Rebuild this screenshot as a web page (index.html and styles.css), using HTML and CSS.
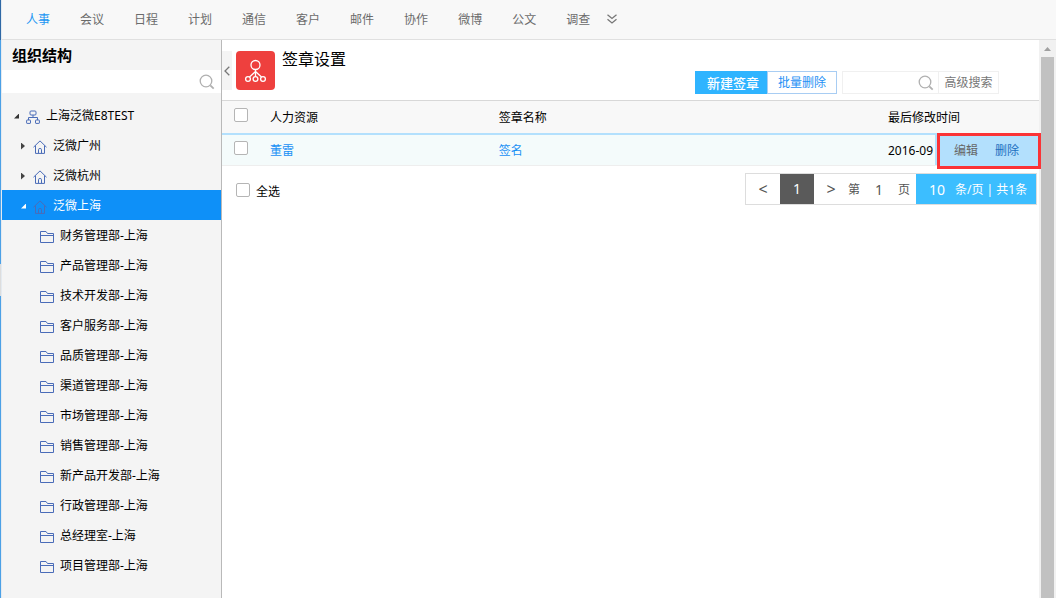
FILE: index.html
```html
<!DOCTYPE html>
<html lang="zh-CN">
<head>
<meta charset="utf-8">
<title>签章设置</title>
<link rel="stylesheet" href="styles.css">
</head>
<body>
<svg class="defs" aria-hidden="true">
  <symbol id="i-search" viewBox="0 0 16 16"><circle cx="7" cy="7" r="5.8"/><path d="M11.3 11.3l3.4 3.4" stroke-width="1.8"/></symbol>
  <symbol id="i-org" viewBox="0 0 14 14"><rect x="4" y="1" width="6" height="4" rx="1"/><path d="M7 5v2.500M2.500 10V7.500h9V10"/><rect x=".6" y="10" width="3.900" height="3.400" rx=".5"/><rect x="9.500" y="10" width="3.900" height="3.400" rx=".5"/></symbol>
  <symbol id="i-home" viewBox="0 0 14 14"><path d="M.5 7.2L7 .9l6.500 6.300M2.500 5.500v7.900h9V5.500M5.500 13.300V9.500q0-1 1.500-1t1.500 1v3.800"/></symbol>
  <symbol id="i-folder" viewBox="0 0 14 14"><path d="M.5 12.500v-11h5.500l1.500 2h6v9zM.5 5.500h13"/></symbol>
</svg>
<div class="app">
  <div class="rail"><div class="rail-top"></div><div class="rail-upper"></div><div class="rail-grip"></div><div class="rail-lower"></div></div>
  <div class="page">
    <nav class="topnav">
      <a class="on" href="#">人事</a><a href="#">会议</a><a href="#">日程</a><a href="#">计划</a><a href="#">通信</a><a href="#">客户</a><a href="#">邮件</a><a href="#">协作</a><a href="#">微博</a><a href="#">公文</a><a href="#">调查</a>
      <button class="more" aria-label="更多"><svg width="10" height="10" viewBox="0 0 10 10"><path d="M.5.8L5 4.500 9.500.8M.5 5.300L5 9l4.500-3.700"/></svg></button>
    </nav>
    <div class="body">
      <aside class="side">
        <h2>组织结构</h2>
        <div class="side-search"><input type="text" aria-label="搜索组织"><button aria-label="搜索"><svg class="search"><use href="#i-search"/></svg></button></div>
        <ul class="tree">
          <li><i class="open"></i><svg class="ico"><use href="#i-org"/></svg><a href="#">上海泛微E8TEST</a></li>
          <li class="l2"><i class="shut"></i><svg class="ico"><use href="#i-home"/></svg><a href="#">泛微广州</a></li>
          <li class="l2"><i class="shut"></i><svg class="ico"><use href="#i-home"/></svg><a href="#">泛微杭州</a></li>
          <li class="l2 sel"><i class="open"></i><svg class="ico"><use href="#i-home"/></svg><a href="#">泛微上海</a></li>
          <li class="l3"><svg class="ico"><use href="#i-folder"/></svg><a href="#">财务管理部-上海</a></li>
          <li class="l3"><svg class="ico"><use href="#i-folder"/></svg><a href="#">产品管理部-上海</a></li>
          <li class="l3"><svg class="ico"><use href="#i-folder"/></svg><a href="#">技术开发部-上海</a></li>
          <li class="l3"><svg class="ico"><use href="#i-folder"/></svg><a href="#">客户服务部-上海</a></li>
          <li class="l3"><svg class="ico"><use href="#i-folder"/></svg><a href="#">品质管理部-上海</a></li>
          <li class="l3"><svg class="ico"><use href="#i-folder"/></svg><a href="#">渠道管理部-上海</a></li>
          <li class="l3"><svg class="ico"><use href="#i-folder"/></svg><a href="#">市场管理部-上海</a></li>
          <li class="l3"><svg class="ico"><use href="#i-folder"/></svg><a href="#">销售管理部-上海</a></li>
          <li class="l3"><svg class="ico"><use href="#i-folder"/></svg><a href="#">新产品开发部-上海</a></li>
          <li class="l3"><svg class="ico"><use href="#i-folder"/></svg><a href="#">行政管理部-上海</a></li>
          <li class="l3"><svg class="ico"><use href="#i-folder"/></svg><a href="#">总经理室-上海</a></li>
          <li class="l3"><svg class="ico"><use href="#i-folder"/></svg><a href="#">项目管理部-上海</a></li>
        </ul>
      </aside>
      <main class="main">
        <header class="head">
          <button class="fold" aria-label="收起"><svg width="6" height="10" viewBox="0 0 6 10"><path d="M5.300.7L1 5l4.300 4.300"/></svg></button>
          <svg class="logo" viewBox="0 0 39 39"><rect width="39" height="39" rx="4" fill="#ee403e"/><g fill="none" stroke="#fff" stroke-width="1.300"><circle cx="19.500" cy="14" r="4.500"/><path d="M19.500 18.500v7M19.500 20.500l-6 5.500M19.500 20.500l6 5.500"/><circle cx="12" cy="28" r="2.400"/><circle cx="19.500" cy="28" r="2.400"/><circle cx="27" cy="28" r="2.400"/></g></svg>
          <h1>签章设置</h1>
          <div class="tools">
            <button class="new">新建签章</button><button class="del">批量删除</button>
            <div class="find"><input type="text" aria-label="搜索签章"><button class="go" aria-label="搜索"><svg class="search"><use href="#i-search"/></svg></button><button class="adv">高级搜索</button></div>
            <button class="list" aria-label="菜单"><svg width="18" height="14" viewBox="0 0 18 14" fill="#4a80bd"><path d="M0 0h2v2H0zM4 0h14v2H4zM0 6h2v2H0zM4 6h14v2H4zM0 12h2v2H0zM4 12h14v2H4z"/></svg></button>
          </div>
        </header>
        <div class="grid">
          <table>
            <colgroup><col class="c1"><col class="c2"><col class="c3"><col class="c4"></colgroup>
            <thead><tr><th><input type="checkbox" aria-label="选择全部"></th><th>人力资源</th><th>签章名称</th><th>最后修改时间</th></tr></thead>
            <tbody><tr><td><input type="checkbox" aria-label="选择董雷"></td><td><a href="#">董雷</a></td><td><a href="#">签名</a></td><td>2016-09</td></tr></tbody>
          </table>
          <div class="ops"><div class="ops-box"><a class="edit" href="#">编辑</a><a href="#">删除</a></div></div>
        </div>
        <footer class="foot">
          <label><input type="checkbox">全选</label>
          <div class="pager">
            <button class="step">&lt;</button><button class="cur">1</button><button class="step">&gt;</button>
            <label class="goto">第<input type="text" value="1" aria-label="页码">页</label>
            <div class="size"><input type="text" value="10" aria-label="每页条数"><span>条/页 | 共1条</span></div>
          </div>
        </footer>
      </main>
      <div class="bar"><i></i><div class="thumb"></div></div>
    </div>
  </div>
</div>
</body>
</html>
```

FILE: styles.css
```css
* { box-sizing: border-box; }
body { margin: 0; font: 12px/18px "Noto Sans", "Noto Sans CJK SC", sans-serif; color: #000; background: #fff; }
a { color: inherit; text-decoration: none; }
button, input { font: inherit; color: inherit; margin: 0; padding: 0; border: 0; background: none; outline: 0; }
h1, h2, ul { margin: 0; padding: 0; }
svg { display: block; fill: none; flex: none; }
.defs { position: absolute; width: 0; height: 0; }
.search { width: 16px; height: 16px; stroke: #b0b0b0; stroke-width: 1.3; }
input[type="checkbox"] { appearance: none; display: block; width: 14px; height: 14px; border: 1px solid #b5b5b5; border-radius: 2px; background: #fff; }

.app { display: flex; min-height: 100vh; }
.rail { display: flex; flex-direction: column; width: 2px; border-right: 1px solid #e4eaf0; }
.rail-top { height: 40px; background: #2f68a5; }
.rail-upper { height: 224px; background: #4ba0e6; }
.rail-grip { height: 32px; background: #ddd; }
.rail-lower { flex: 1; background: #4ba0e6; }
.page { flex: 1; min-width: 0; display: flex; flex-direction: column; }

.topnav { display: flex; align-items: center; height: 40px; padding-left: 9px; background: #f8f8f8; border-bottom: 1px solid #e0e0e0; color: #6b6b6b; }
.topnav a { padding: 0 15px; }
.topnav .on { color: #2196f3; }
.more { padding: 0 2px 2px; }
.more svg { stroke: #777; stroke-width: 1.3; }

.body { flex: 1; display: flex; }
.side { flex: none; width: 220px; background: #f4f4f4; border-right: 1px solid #b9b9b9; }
.side h2 { padding: 0 10px; font-size: 15px; line-height: 30px; font-weight: bold; }
.side-search { display: flex; align-items: center; height: 23px; padding-right: 6px; background: #fff; }
.side-search input { flex: 1; min-width: 0; }
.tree { list-style: none; padding-top: 7px; }
.tree li { display: flex; align-items: center; height: 30px; padding: 2px 0 0 12px; }
.tree .l2 { padding-left: 19px; }
.tree .l3 { padding-left: 38px; }
.tree .sel { background: #0e90f8; color: #fff; }
.tree i { width: 5px; margin-right: 7px; }
.open { height: 5px; background: #333; clip-path: polygon(100% 0, 100% 100%, 0 100%); }
.sel .open { background: #fff; }
.shut { height: 7px; background: #444; clip-path: polygon(0 0, 80% 50%, 0 100%); }
.ico { width: 14px; height: 14px; margin: 2px 6px 0 0; stroke: #4a6cb8; }

.main { flex: 1; min-width: 0; }
.head { display: flex; height: 61px; padding-top: 11px; border-bottom: 1px solid #d8d8d8; }
.fold { display: flex; align-items: center; justify-content: center; width: 10px; height: 39px; background: #f4f4f4; }
.fold svg { stroke: #777; stroke-width: 1.3; }
.logo { width: 39px; height: 39px; margin: 0 7px 0 4px; }
.head h1 { font-size: 16px; line-height: 16px; font-weight: normal; }
.tools { display: flex; align-items: center; height: 23px; margin: 20px 11px 0 auto; }
.new { width: 72px; height: 23px; font-size: 13px; font-weight: 500; color: #fff; background: #2fb4ff; padding-left: 4px; }
.del { width: 70px; height: 23px; border: 1px solid #a8cdf3; color: #1e90f5; }
.find { display: flex; width: 157px; height: 23px; margin: 0 11px 0 5px; border: 1px solid #f0f0f0; }
.find input { flex: 1; min-width: 0; }
.go { padding-right: 4px; }
.adv { width: 60px; border-left: 1px solid #f0f0f0; color: #777; }

.grid { position: relative; }
table { width: 100%; table-layout: fixed; border-collapse: separate; border-spacing: 0; }
.c1 { width: 48px; }
.c2 { width: 28%; }
.c4 { width: 151px; }
th, td { padding: 2px 0 0; text-align: left; font-weight: normal; }
th { height: 34px; background: #f8f8f8; border-bottom: 2px solid #b3e0fd; }
td { height: 31px; background: #f4fbfb; border-bottom: 1px solid #eee; }
td a { color: #1890f5; }
th:first-child, td:first-child { padding: 0 0 4px 12px; }
.ops { position: absolute; right: -2px; top: 32px; padding-left: 2px; height: 36px; background: linear-gradient(#b3e0fd, #b3e0fd) 0 0 / 2px 32px no-repeat; }
.ops-box { display: flex; align-items: center; gap: 17px; width: 104px; height: 36px; padding-left: 14px; border: 3px solid #fb3336; background: #b3e0fd; color: #1c6fc0; }
.edit { color: #666; }

.foot { display: flex; align-items: flex-start; justify-content: space-between; padding: 7px 2px 0 14px; }
.foot label { display: flex; align-items: center; gap: 6px; }
.foot > label { padding-top: 10px; }
.foot > label input { margin-bottom: 4px; }
.pager { display: flex; height: 32px; border: 1px solid #ddd; color: #555; }
.step { width: 34px; font-size: 16px; }
.cur { width: 34px; font-size: 14px; color: #fff; background: #5a5a5a; }
.pager .goto { width: 68px; padding-top: 2px; gap: 4px; }
.goto input { width: 30px; text-align: center; font-size: 14px; }
.size { display: flex; align-items: center; width: 120px; padding: 2px 0 0 13px; background: #3cbeff; color: #fff; }
.size input { width: 26px; font-size: 14px; }

.bar { flex: none; width: 17px; padding: 0 2px; display: flex; flex-direction: column; align-items: center; background: #f1f1f1; }
.bar i { width: 7px; height: 4px; margin: 7px 0 6px; background: #a0a0a0; clip-path: polygon(50% 0, 100% 100%, 0 100%); }
.thumb { flex: 1; width: 13px; background: #c1c1c1; }
```
